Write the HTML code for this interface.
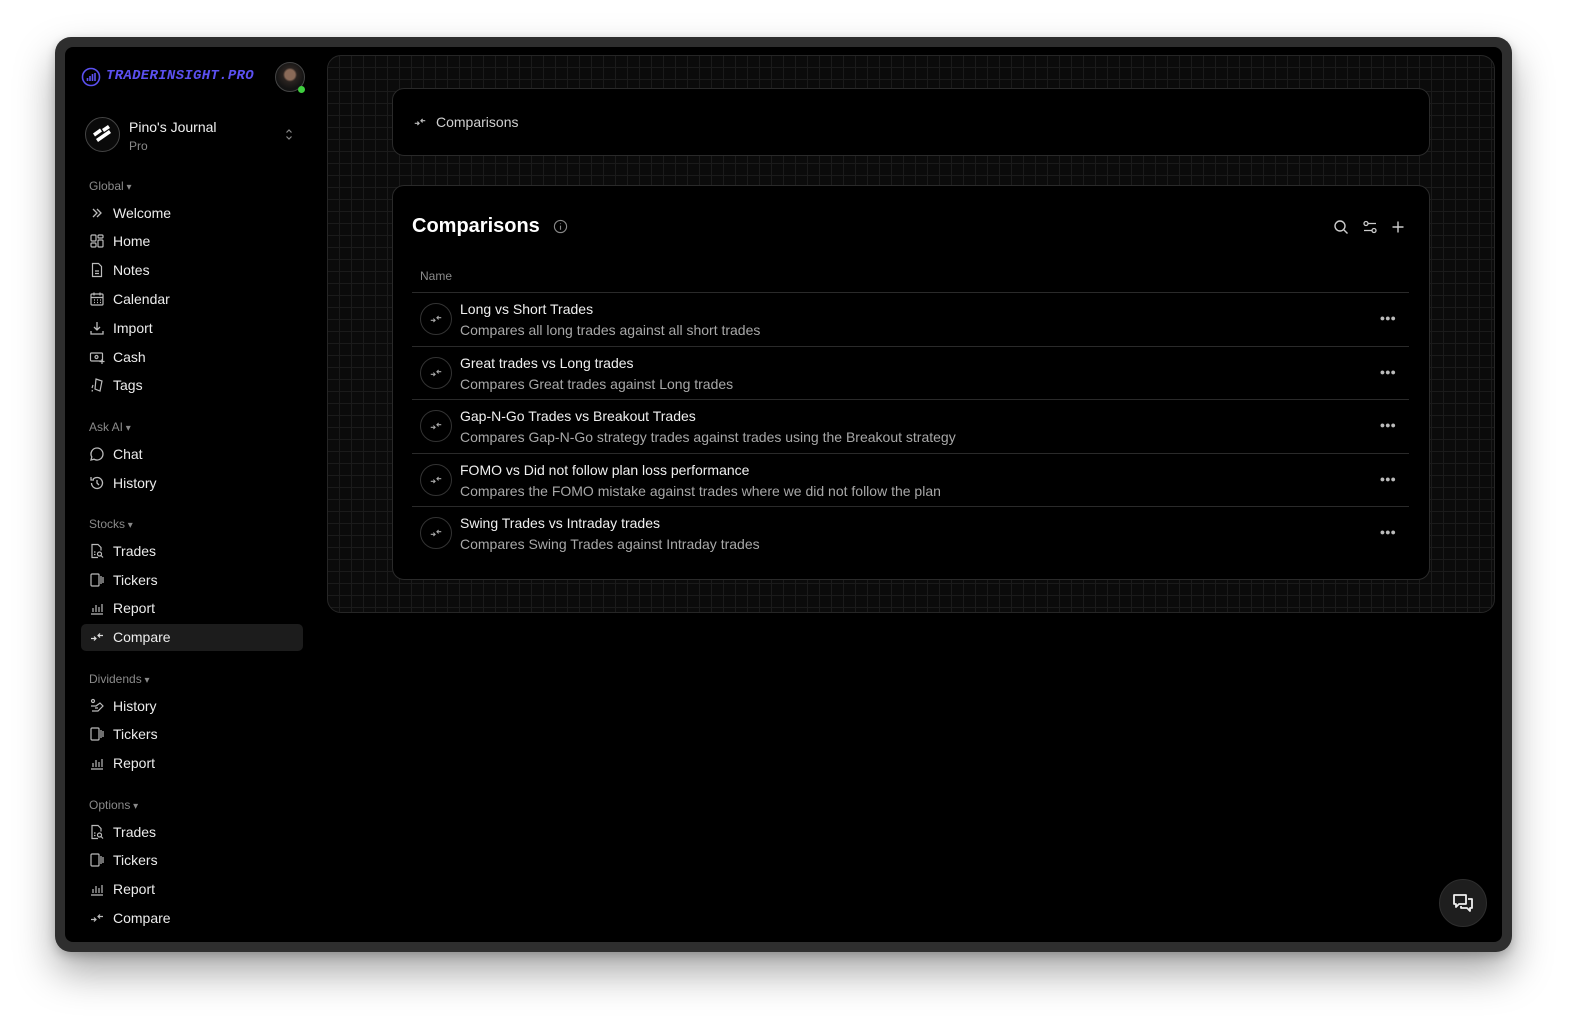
<!DOCTYPE html>
<html><head><meta charset="utf-8">
<style>
*{margin:0;padding:0;box-sizing:border-box}
html,body{width:1582px;height:1035px;background:#fff;overflow:hidden;font-family:"Liberation Sans",sans-serif}
.frame{position:absolute;left:55px;top:37px;width:1457px;height:915px;background:#2e2e2e;border-radius:16px;box-shadow:0 20px 40px rgba(0,0,0,.35),0 4px 10px rgba(0,0,0,.2)}
.screen{position:absolute;left:65px;top:47px;width:1437px;height:895px;background:#000;border-radius:8px;overflow:hidden}
.a{position:absolute}
.it{position:absolute;left:89px;height:20px;line-height:20px;color:#ececec;font-size:14px;white-space:nowrap}
.it svg{position:absolute;left:0;top:2px}
.it span{position:absolute;left:24px}
.sec{position:absolute;left:89px;color:#8a8a8a;font-size:12px;line-height:16px}
.sec:after{content:" \25BE";font-size:10px}
.grid{position:absolute;left:327px;top:55px;width:1168px;height:558px;border:1px solid #262626;border-radius:14px;background-color:#0b0b0b;
background-image:linear-gradient(#1b1b1b 1px,transparent 1px),linear-gradient(90deg,#1b1b1b 1px,transparent 1px);background-size:12px 12px;background-position:-1px -1px}
.card{position:absolute;background:#000;border:1px solid #2a2a2a;border-radius:12px}
.row{position:absolute;left:412px;width:997px;height:54px;border-top:1px solid #2a2a2a}
.ic{position:absolute;left:8px;top:10px;width:32px;height:32px;border:1px solid #333;border-radius:50%}
.ic svg{position:absolute;left:8px;top:8px}
.t1{position:absolute;left:48px;top:8px;color:#f0f0f0;font-size:14px}
.t2{position:absolute;left:48px;top:29px;color:#a8a8a8;font-size:14px}
.dots{position:absolute;right:13px;top:20px;color:#bbb;font-size:9px;letter-spacing:0px}
</style></head><body>
<div class="frame"></div>
<div class="screen"></div>

<!-- logo -->
<svg class="a" style="left:81px;top:67px" width="20" height="20" viewBox="0 0 20 20" fill="none" stroke="#5b50f0" stroke-width="1.6"><circle cx="10" cy="10" r="8.5"/><path d="M6.5 14v-3M9 14V9M11.5 14V7M14 14V6"/></svg>
<div class="a" style="left:106px;top:68px;color:#5b50f0;font-family:'Liberation Mono',monospace;font-weight:bold;font-style:italic;font-size:14px;letter-spacing:0.3px">TRADERINSIGHT.PRO</div>
<div class="a" style="left:275px;top:62px;width:30px;height:30px;border-radius:50%;border:1px solid #444;background:radial-gradient(circle at 50% 42%,#8a6a58 0 5px,#2a2320 7px,#141414 14px)"></div>
<div class="a" style="left:298px;top:86px;width:7px;height:7px;border-radius:50%;background:#3fcf3f"></div>

<div class="a" style="left:85px;top:117px;width:35px;height:35px;border-radius:50%;border:1px solid #444;background:#0a0a0a"></div>
<svg class="a" style="left:89px;top:121px" width="27" height="27" viewBox="0 0 27 27"><g fill="#fff"><path d="M4 12.5l7-5 2 3-7 5z"/><path d="M7 18l13-9 2 3-13 9z"/><path d="M13 8l6-4 2 3-6 4z"/></g></svg>
<div class="a" style="left:129px;top:119px;color:#f0f0f0;font-size:14px">Pino's Journal</div>
<div class="a" style="left:129px;top:139px;color:#8a8a8a;font-size:12px">Pro</div>
<svg class="a" style="left:285px;top:128px" width="8" height="13" viewBox="0 0 8 13" fill="none" stroke="#888" stroke-width="1.2"><path d="M1.5 4.5L4 2l2.5 2.5M1.5 8.5L4 11l2.5-2.5"/></svg>

<!-- sidebar -->
<div class="sec" style="top:178px">Global</div>
<div class="it" style="top:203px"><svg width="16" height="16" viewBox="0 0 16 16" fill="none" stroke="#bbb" stroke-width="1.3"><path d="M4 4l4 4-4 4M8 4l4 4-4 4"/></svg><span>Welcome</span></div>
<div class="it" style="top:231px"><svg width="16" height="16" viewBox="0 0 16 16" fill="none" stroke="#bbb" stroke-width="1.2"><rect x="2" y="2" width="5" height="6" rx="1"/><rect x="9" y="2" width="5" height="3" rx="1"/><rect x="2" y="10" width="5" height="4" rx="1"/><rect x="9" y="7" width="5" height="7" rx="1"/></svg><span>Home</span></div>
<div class="it" style="top:260px"><svg width="16" height="16" viewBox="0 0 16 16" fill="none" stroke="#bbb" stroke-width="1.2"><path d="M3.5 1.5h6l3 3v10h-9z"/><path d="M6 9h4M6 11.5h4"/></svg><span>Notes</span></div>
<div class="it" style="top:289px"><svg width="16" height="16" viewBox="0 0 16 16" fill="none" stroke="#bbb" stroke-width="1.2"><rect x="2" y="3" width="12" height="11" rx="1"/><path d="M2 6.5h12M5 1.5v3M11 1.5v3M5 9h1M8 9h1M11 9h1M5 11.5h1M8 11.5h1M11 11.5h1"/></svg><span>Calendar</span></div>
<div class="it" style="top:318px"><svg width="16" height="16" viewBox="0 0 16 16" fill="none" stroke="#bbb" stroke-width="1.3"><path d="M8 2v8M5 7l3 3 3-3M2 11v3h12v-3"/></svg><span>Import</span></div>
<div class="it" style="top:347px"><svg width="16" height="16" viewBox="0 0 16 16" fill="none" stroke="#bbb" stroke-width="1.2"><rect x="1.5" y="4" width="12" height="8" rx="1"/><circle cx="7.5" cy="8" r="1.5"/><path d="M13 10v5M10.5 12.5h5"/></svg><span>Cash</span></div>
<div class="it" style="top:375px"><svg width="16" height="16" viewBox="0 0 16 16" fill="none" stroke="#bbb" stroke-width="1.2"><path d="M7 2l6 2-2 10-5-2z"/><path d="M4 8l-1 3M3.5 13l-.5 1.5"/></svg><span>Tags</span></div>

<div class="sec" style="top:419px">Ask AI</div>
<div class="it" style="top:444px"><svg width="16" height="16" viewBox="0 0 16 16" fill="none" stroke="#bbb" stroke-width="1.3"><path d="M8 2a6 6 0 1 1-3 11.2L2 14l.8-3A6 6 0 0 1 8 2z"/></svg><span>Chat</span></div>
<div class="it" style="top:473px"><svg width="16" height="16" viewBox="0 0 16 16" fill="none" stroke="#bbb" stroke-width="1.3"><path d="M2.5 8A5.5 5.5 0 1 0 4 4.2M2 2v3h3M8 5v3l2 2"/></svg><span>History</span></div>

<div class="sec" style="top:516px">Stocks</div>
<div class="it" style="top:541px"><svg width="16" height="16" viewBox="0 0 16 16" fill="none" stroke="#bbb" stroke-width="1.2"><path d="M9 14.5H3v-13h6l3 3v3"/><circle cx="10.5" cy="11" r="2"/><path d="M12 12.5l2 2M5 9h1.5M5 11.5h1.5"/></svg><span>Trades</span></div>
<div class="it" style="top:570px"><svg width="16" height="16" viewBox="0 0 16 16" fill="none" stroke="#bbb" stroke-width="1.2"><rect x="2" y="2" width="8" height="12" rx="1"/><path d="M12 4v8M14 5v6"/></svg><span>Tickers</span></div>
<div class="it" style="top:598px"><svg width="16" height="16" viewBox="0 0 16 16" fill="none" stroke="#bbb" stroke-width="1.2"><path d="M2 14h12M4 12V8M7 12V5M10 12V7M13 12V4"/></svg><span>Report</span></div>
<div class="a" style="left:81px;top:624px;width:222px;height:27px;background:#1c1c1c;border-radius:5px"></div>
<div class="it" style="top:627px"><svg width="16" height="16" viewBox="0 0 16 16" fill="none" stroke="#ddd" stroke-width="1.2"><path d="M2 9.5h5M5 7.5l2 2-2 2M14 6.5H9M11 4.5l-2 2 2 2"/></svg><span>Compare</span></div>

<div class="sec" style="top:671px">Dividends</div>
<div class="it" style="top:696px"><svg width="16" height="16" viewBox="0 0 16 16" fill="none" stroke="#bbb" stroke-width="1.2"><circle cx="4" cy="3" r="1.5"/><path d="M2 8h5l4-3 3 3-5 5H3M6 10h3"/></svg><span>History</span></div>
<div class="it" style="top:724px"><svg width="16" height="16" viewBox="0 0 16 16" fill="none" stroke="#bbb" stroke-width="1.2"><rect x="2" y="2" width="8" height="12" rx="1"/><path d="M12 4v8M14 5v6"/></svg><span>Tickers</span></div>
<div class="it" style="top:753px"><svg width="16" height="16" viewBox="0 0 16 16" fill="none" stroke="#bbb" stroke-width="1.2"><path d="M2 14h12M4 12V8M7 12V5M10 12V7M13 12V4"/></svg><span>Report</span></div>

<div class="sec" style="top:797px">Options</div>
<div class="it" style="top:822px"><svg width="16" height="16" viewBox="0 0 16 16" fill="none" stroke="#bbb" stroke-width="1.2"><path d="M9 14.5H3v-13h6l3 3v3"/><circle cx="10.5" cy="11" r="2"/><path d="M12 12.5l2 2M5 9h1.5M5 11.5h1.5"/></svg><span>Trades</span></div>
<div class="it" style="top:850px"><svg width="16" height="16" viewBox="0 0 16 16" fill="none" stroke="#bbb" stroke-width="1.2"><rect x="2" y="2" width="8" height="12" rx="1"/><path d="M12 4v8M14 5v6"/></svg><span>Tickers</span></div>
<div class="it" style="top:879px"><svg width="16" height="16" viewBox="0 0 16 16" fill="none" stroke="#bbb" stroke-width="1.2"><path d="M2 14h12M4 12V8M7 12V5M10 12V7M13 12V4"/></svg><span>Report</span></div>
<div class="it" style="top:908px"><svg width="16" height="16" viewBox="0 0 16 16" fill="none" stroke="#bbb" stroke-width="1.2"><path d="M2 9.5h5M5 7.5l2 2-2 2M14 6.5H9M11 4.5l-2 2 2 2"/></svg><span>Compare</span></div>

<!-- main -->
<div class="grid"></div>
<div class="card" style="left:392px;top:88px;width:1038px;height:68px"></div>
<svg class="a" style="left:413px;top:115px" width="14" height="14" viewBox="0 0 16 16" fill="none" stroke="#bbb" stroke-width="1.3"><path d="M2 9.5h5M5 7.5l2 2-2 2M14 6.5H9M11 4.5l-2 2 2 2"/></svg>
<div class="a" style="left:436px;top:114px;color:#d0d0d0;font-size:14px">Comparisons</div>

<div class="card" style="left:392px;top:185px;width:1038px;height:395px"></div>
<div class="a" style="left:412px;top:215px;color:#fff;font-size:20px;font-weight:bold">Comparisons</div>
<svg class="a" style="left:553px;top:219px" width="15" height="15" viewBox="0 0 16 16" fill="none" stroke="#888" stroke-width="1.2"><circle cx="8" cy="8" r="6.5"/><path d="M8 7v4.5M8 4.6v.8"/></svg>
<svg class="a" style="left:1333px;top:219px" width="16" height="16" viewBox="0 0 16 16" fill="none" stroke="#ccc" stroke-width="1.4"><circle cx="7" cy="7" r="5"/><path d="M11 11l3.5 3.5"/></svg>
<svg class="a" style="left:1362px;top:219px" width="16" height="16" viewBox="0 0 16 16" fill="none" stroke="#ccc" stroke-width="1.3"><circle cx="4" cy="4.5" r="2"/><circle cx="12" cy="11.5" r="2"/><path d="M6 4.5h8M2 11.5h8"/></svg>
<svg class="a" style="left:1390px;top:219px" width="16" height="16" viewBox="0 0 16 16" fill="none" stroke="#ccc" stroke-width="1.4"><path d="M8 2.5v11M2.5 8h11"/></svg>
<div class="a" style="left:420px;top:269px;color:#8a8a8a;font-size:12px">Name</div>

<div class="row" style="top:292px"><div class="ic"><svg width="14" height="14" viewBox="0 0 16 16" fill="none" stroke="#aaa" stroke-width="1.2"><path d="M2 9.5h5M5 7.5l2 2-2 2M14 6.5H9M11 4.5l-2 2 2 2"/></svg></div><div class="t1">Long vs Short Trades</div><div class="t2">Compares all long trades against all short trades</div><div class="dots">●●●</div></div>
<div class="row" style="top:346px"><div class="ic"><svg width="14" height="14" viewBox="0 0 16 16" fill="none" stroke="#aaa" stroke-width="1.2"><path d="M2 9.5h5M5 7.5l2 2-2 2M14 6.5H9M11 4.5l-2 2 2 2"/></svg></div><div class="t1">Great trades vs Long trades</div><div class="t2">Compares Great trades against Long trades</div><div class="dots">●●●</div></div>
<div class="row" style="top:399px"><div class="ic"><svg width="14" height="14" viewBox="0 0 16 16" fill="none" stroke="#aaa" stroke-width="1.2"><path d="M2 9.5h5M5 7.5l2 2-2 2M14 6.5H9M11 4.5l-2 2 2 2"/></svg></div><div class="t1">Gap-N-Go Trades vs Breakout Trades</div><div class="t2">Compares Gap-N-Go strategy trades against trades using the Breakout strategy</div><div class="dots">●●●</div></div>
<div class="row" style="top:453px"><div class="ic"><svg width="14" height="14" viewBox="0 0 16 16" fill="none" stroke="#aaa" stroke-width="1.2"><path d="M2 9.5h5M5 7.5l2 2-2 2M14 6.5H9M11 4.5l-2 2 2 2"/></svg></div><div class="t1">FOMO vs Did not follow plan loss performance</div><div class="t2">Compares the FOMO mistake against trades where we did not follow the plan</div><div class="dots">●●●</div></div>
<div class="row" style="top:506px"><div class="ic"><svg width="14" height="14" viewBox="0 0 16 16" fill="none" stroke="#aaa" stroke-width="1.2"><path d="M2 9.5h5M5 7.5l2 2-2 2M14 6.5H9M11 4.5l-2 2 2 2"/></svg></div><div class="t1">Swing Trades vs Intraday trades</div><div class="t2">Compares Swing Trades against Intraday trades</div><div class="dots">●●●</div></div>

<!-- chat button -->
<div class="a" style="left:1439px;top:879px;width:48px;height:48px;border-radius:50%;background:#1e1e1e;border:1px solid #2e2e2e"></div>
<svg class="a" style="left:1451px;top:891px" width="24" height="24" viewBox="0 0 24 24" fill="none" stroke="#f0f0f0" stroke-width="1.8" stroke-linejoin="round"><path d="M3 4h12v9H8l-3 3v-3H3z"/><path d="M17 8h4v9h-2v3l-3-3h-6v-2"/></svg>
</body></html>
